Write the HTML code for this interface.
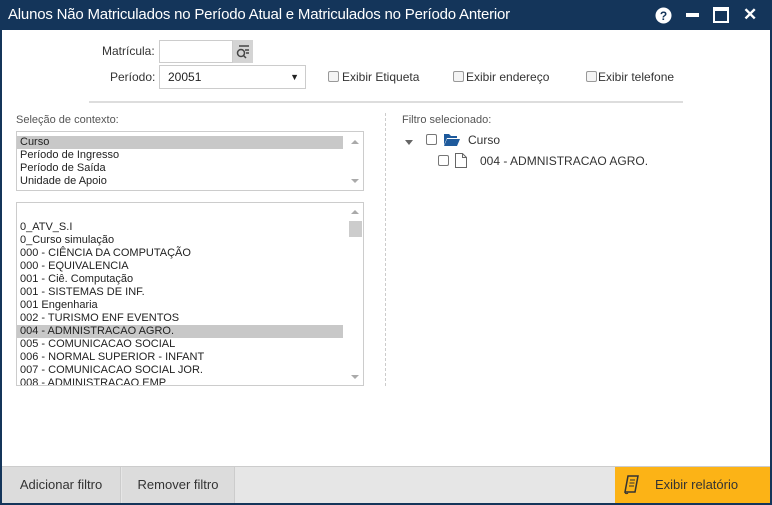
<!DOCTYPE html>
<html><head><meta charset="utf-8"><style>
*{margin:0;padding:0;box-sizing:border-box}
body{width:772px;height:505px;background:#fff;font-family:"Liberation Sans",sans-serif;position:relative;overflow:hidden}
.frame{position:absolute;left:0;top:0;width:772px;height:505px;border:2px solid #14355a;border-top:none}
.title{position:absolute;left:0;top:0;width:772px;height:30px;background:#14355a;color:#fff;font-size:15px;line-height:30px;padding-left:8px;letter-spacing:-0.2px}
.a{position:absolute;font-size:12px;color:#333;white-space:nowrap}
.cb{position:absolute;width:11px;height:11px;border:1px solid #999;border-radius:2px;background:#f4f4f4}
.box{position:absolute;border:1px solid #ccc;background:#fff;overflow:hidden}
.it{font-size:11px;line-height:13px;height:13px;padding-left:3px;color:#222;white-space:nowrap;width:326px}
.sel{background:#c8c8c8}
.sb{position:absolute;right:0;top:0;width:16px;height:100%}
.up,.dn{position:absolute;left:4px;width:0;height:0;border-left:4px solid transparent;border-right:4px solid transparent}
.up{border-bottom:4px solid #aaa}.dn{border-top:4px solid #aaa}
</style></head><body>
<div class="title">Alunos Não Matriculados no Período Atual e Matriculados no Período Anterior
<svg style="position:absolute;left:655px;top:7px" width="17" height="17"><circle cx="8.5" cy="8.5" r="8" fill="#fff"/><text x="8.5" y="13" text-anchor="middle" font-size="12" font-weight="bold" fill="#14355a" font-family="Liberation Sans">?</text></svg>
<div style="position:absolute;left:686px;top:13px;width:13px;height:4px;background:#fff"></div>
<div style="position:absolute;left:713px;top:7px;width:16px;height:16px;border:2px solid #fff;border-top-width:4px"></div>
<div style="position:absolute;left:743px;top:0;font-size:17px;font-weight:bold">✕</div>
</div>
<div class="frame"></div>

<div class="a" style="left:102px;top:44px">Matrícula:</div>
<div style="position:absolute;left:159px;top:40px;width:74px;height:23px;border:1px solid #ccc"></div>
<div style="position:absolute;left:233px;top:40px;width:20px;height:23px;background:#d4d4d4"></div>
<svg style="position:absolute;left:236px;top:45px" width="14" height="14"><circle cx="5" cy="8" r="3.5" fill="none" stroke="#444" stroke-width="1.5"/><line x1="7.5" y1="10.5" x2="10" y2="13" stroke="#444" stroke-width="1.5"/><line x1="3" y1="1" x2="13" y2="1" stroke="#444" stroke-width="1.5"/><line x1="9" y1="5" x2="13" y2="5" stroke="#444" stroke-width="1.5"/><line x1="10" y1="8" x2="13" y2="8" stroke="#444" stroke-width="1.5"/></svg>
<div class="a" style="left:110px;top:70px">Período:</div>
<div style="position:absolute;left:159px;top:65px;width:147px;height:24px;border:1px solid #ccc;font-size:12px;line-height:22px;padding-left:8px;color:#222">20051<span style="position:absolute;right:6px;font-size:9px">▼</span></div>
<div class="cb" style="left:328px;top:71px"></div><div class="a" style="left:342px;top:70px">Exibir Etiqueta</div>
<div class="cb" style="left:453px;top:71px"></div><div class="a" style="left:466px;top:70px">Exibir endereço</div>
<div class="cb" style="left:586px;top:71px"></div><div class="a" style="left:598px;top:70px">Exibir telefone</div>
<div style="position:absolute;left:89px;top:101px;width:594px;height:2px;background:#ddd"></div>

<div class="a" style="left:16px;top:114px;font-size:11px;color:#555">Seleção de contexto:</div>
<div class="box" style="left:16px;top:131px;width:348px;height:60px;padding-top:4px">
<div class="it sel">Curso</div><div class="it">Período de Ingresso</div><div class="it">Período de Saída</div><div class="it">Unidade de Apoio</div>
<div class="sb"><div class="up" style="top:8px"></div><div class="dn" style="top:47px"></div></div></div>
<div class="box" style="left:16px;top:202px;width:348px;height:184px;padding-top:5px">
<div class="it"></div><div class="it">0_ATV_S.I</div><div class="it">0_Curso simulação</div><div class="it">000 - CIÊNCIA DA COMPUTAÇÃO</div><div class="it">000 - EQUIVALENCIA</div><div class="it">001 - Ciê. Computação</div><div class="it">001 - SISTEMAS DE INF.</div><div class="it">001 Engenharia</div><div class="it">002 - TURISMO ENF EVENTOS</div><div class="it sel">004 - ADMNISTRACAO AGRO.</div><div class="it">005 - COMUNICACAO SOCIAL</div><div class="it">006 - NORMAL SUPERIOR - INFANT</div><div class="it">007 - COMUNICACAO SOCIAL JOR.</div><div class="it">008 - ADMINISTRACAO EMP</div>
<div class="sb"><div class="up" style="top:7px"></div><div style="position:absolute;left:2px;top:18px;width:13px;height:16px;background:#ccc"></div><div class="dn" style="top:172px"></div></div></div>

<div style="position:absolute;left:385px;top:113px;height:273px;border-left:1px dashed #ccc"></div>
<div class="a" style="left:402px;top:114px;font-size:11px;color:#555">Filtro selecionado:</div>
<div class="up" style="left:405px;top:140px;border-bottom:none;border-top:5px solid #666"></div>
<div class="cb" style="left:426px;top:134px;background:#fff;border-color:#777"></div>
<svg style="position:absolute;left:444px;top:133px" width="16" height="13"><path d="M0 1h5l2 2h6v2H3L0 12z" fill="#1e5a9c"/><path d="M3 6h13l-3 7H0z" fill="#1e5a9c"/></svg>
<div class="a" style="left:468px;top:133px">Curso</div>
<div class="cb" style="left:438px;top:155px;background:#fff;border-color:#777"></div>
<svg style="position:absolute;left:455px;top:153px" width="12" height="15"><path d="M0.5 0.5h7l4 4v10h-11z M7.5 0.5v4h4" fill="#fff" stroke="#666"/></svg>
<div class="a" style="left:480px;top:154px">004 - ADMNISTRACAO AGRO.</div>

<div style="position:absolute;left:2px;top:466px;width:768px;height:37px;background:#e6e6e6;border-top:1px solid #ccc"></div>
<div style="position:absolute;left:2px;top:467px;width:119px;height:36px;background:#dcdcdc;border-right:1px solid #ccc;font-size:13px;line-height:36px;text-align:center;color:#333">Adicionar filtro</div>
<div style="position:absolute;left:122px;top:467px;width:113px;height:36px;background:#dcdcdc;border-right:1px solid #ccc;font-size:13px;line-height:36px;text-align:center;color:#333">Remover filtro</div>
<div style="position:absolute;left:615px;top:467px;width:155px;height:36px;background:#fcb316;font-size:13px;line-height:36px;color:#333;padding-left:40px">Exibir relatório</div>
<svg style="position:absolute;left:624px;top:475px" width="16" height="20"><path d="M4 1h10l-3 16H1z" fill="none" stroke="#333" stroke-width="1.5"/><path d="M6 5h5M5.5 8h5M5 11h5" stroke="#333"/><path d="M1 17c0 2 2 2 3 1" fill="none" stroke="#333"/></svg>
</body></html>
